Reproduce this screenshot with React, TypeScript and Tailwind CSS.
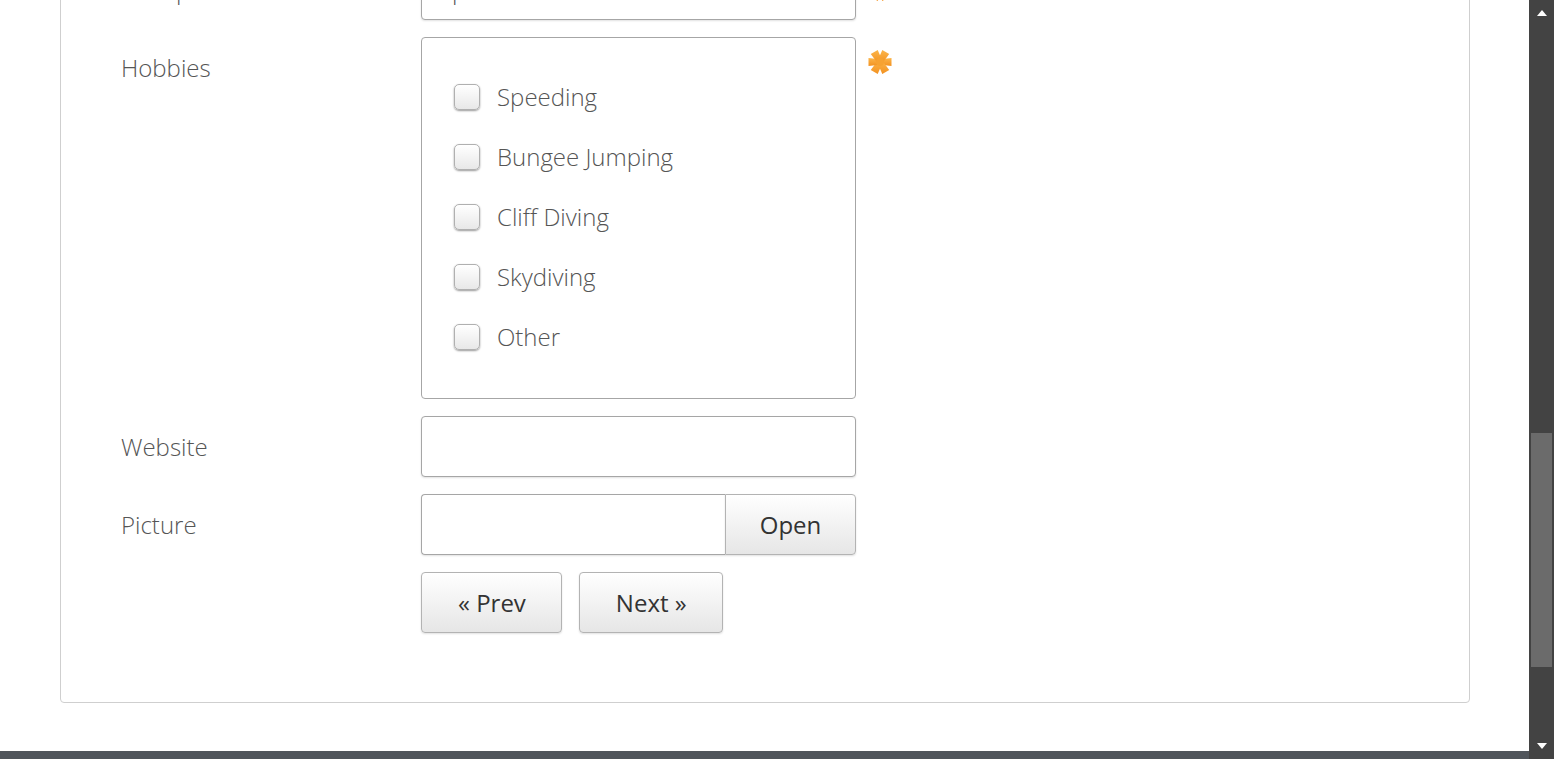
import React from "react";

const hobbies = ["Speeding", "Bungee Jumping", "Cliff Diving", "Skydiving", "Other"];

const Required: React.FC<{ className?: string }> = ({ className = "" }) => {
  const arms = [0, 60, 120, 180, 240, 300].map((deg) => {
    const a = (deg * Math.PI) / 180;
    const c = Math.cos(a);
    const s = Math.sin(a);
    const px = -s;
    const py = c;
    const r = 11.5;
    const w0 = 2.7;
    const w1 = 4;
    const pts = [
      [12 + px * w0, 12 + py * w0],
      [12 + c * r + px * w1, 12 + s * r + py * w1],
      [12 + c * r - px * w1, 12 + s * r - py * w1],
      [12 - px * w0, 12 - py * w0],
    ]
      .map((p) => p.map((v) => v.toFixed(2)).join(","))
      .join(" ");
    return <polygon key={deg} points={pts} />;
  });
  return (
    <svg viewBox="0 0 24 24" className={`w-[24px] h-[24px] shrink-0 ${className}`}>
      <defs>
        <linearGradient id="reqGrad" x1="0" y1="0" x2="0" y2="1">
          <stop offset="0" stopColor="#fbb54a" />
          <stop offset="1" stopColor="#f39221" />
        </linearGradient>
      </defs>
      <g fill="url(#reqGrad)">{arms}</g>
      <circle cx="12" cy="12" r="4" fill="#f6a232" />
    </svg>
  );
};

const Label: React.FC<{ children: React.ReactNode }> = ({ children }) => (
  <div className="w-[300px] h-[61px] shrink-0 flex items-center text-[24px] font-light text-[#555]">
    {children}
  </div>
);

const TextInput: React.FC<{ value?: string }> = ({ value = "" }) => (
  <input
    type="text"
    defaultValue={value}
    className="w-[435px] h-[61px] px-[30px] border border-[#a6a6a6] rounded-[4px] bg-white text-[24px] font-light text-[#555] shadow-[0_1px_2px_rgba(0,0,0,0.12)] outline-none"
  />
);

const Button: React.FC<{ children: React.ReactNode; className?: string }> = ({ children, className = "" }) => (
  <button
    type="button"
    className={`h-[61px] border border-[#b3b3b3] bg-linear-to-b from-white to-[#e6e6e6] text-[24px] text-[#333] shadow-[0_1px_2px_rgba(0,0,0,0.12)] ${className}`}
  >
    {children}
  </button>
);

const Scrollbar: React.FC = () => (
  <div className="w-[25px] shrink-0 bg-[#434343] flex flex-col">
    <div className="h-[433px] flex justify-center pt-[10px]">
      <div className="w-0 h-0 border-x-[5px] border-b-[6px] border-x-transparent border-b-white" />
    </div>
    <div className="h-[234px] mx-[2px] bg-[#6b6b6b]" />
    <div className="flex-1 flex flex-col justify-end items-center pb-[10px]">
      <div className="w-0 h-0 border-x-[5px] border-t-[6px] border-x-transparent border-t-white" />
    </div>
  </div>
);

export default function App() {
  return (
    <div className="h-screen w-full flex overflow-hidden bg-white font-['Open_Sans',sans-serif]">
      <div className="flex-1 min-w-0 flex flex-col">
        <div className="flex-1 min-h-0 flex flex-col justify-end overflow-hidden">
          <div className="ml-[60px] w-[1410px] mb-[48px] shrink-0 border border-[#cfcfcf] rounded-[4px] pl-[60px] pt-[40px] pb-[69px] flex flex-col gap-[17px]">
            <div className="flex items-start">
              <Label>E-mail</Label>
              <TextInput value="jane@example.com" />
              <Required className="ml-[12px] mt-[18px]" />
            </div>
            <div className="flex items-start">
              <Label>Group</Label>
              <TextInput value="public" />
              <Required className="ml-[12px] mt-[18px]" />
            </div>
            <div className="flex items-start">
              <Label>Hobbies</Label>
              <div className="w-[435px] h-[362px] border border-[#a6a6a6] rounded-[4px] px-[32px] pt-[29px] pb-[31px] flex flex-col">
                {hobbies.map((h) => (
                  <label key={h} className="h-[60px] flex items-center gap-[17px] cursor-pointer">
                    <input
                      type="checkbox"
                      className="appearance-none w-[26px] h-[26px] rounded-[5px] border border-[#b0b0b0] bg-linear-to-b from-white to-[#e8e8e8] shadow-[0_1px_2px_rgba(0,0,0,0.4)]"
                    />
                    <span className="text-[24px] font-light text-[#555]">{h}</span>
                  </label>
                ))}
              </div>
              <Required className="ml-[12px] mt-[13px]" />
            </div>
            <div className="flex items-start">
              <Label>Website</Label>
              <TextInput />
            </div>
            <div className="flex items-start">
              <Label>Picture</Label>
              <div className="w-[435px] h-[61px] flex">
                <input
                  type="text"
                  className="flex-1 min-w-0 h-[61px] px-[30px] border border-r-0 border-[#a6a6a6] rounded-l-[4px] outline-none shadow-[0_1px_2px_rgba(0,0,0,0.12)]"
                />
                <Button className="w-[131px] rounded-r-[4px]">Open</Button>
              </div>
            </div>
            <div className="flex items-start">
              <div className="w-[300px] shrink-0" />
              <div className="flex gap-[17px]">
                <Button className="pl-[36px] pr-[35px] rounded-[4px]">« Prev</Button>
                <Button className="pl-[36px] pr-[35px] rounded-[4px]">Next »</Button>
              </div>
            </div>
          </div>
        </div>
        <div className="h-[8px] shrink-0 bg-[#50555b]" />
      </div>
      <Scrollbar />
    </div>
  );
}
